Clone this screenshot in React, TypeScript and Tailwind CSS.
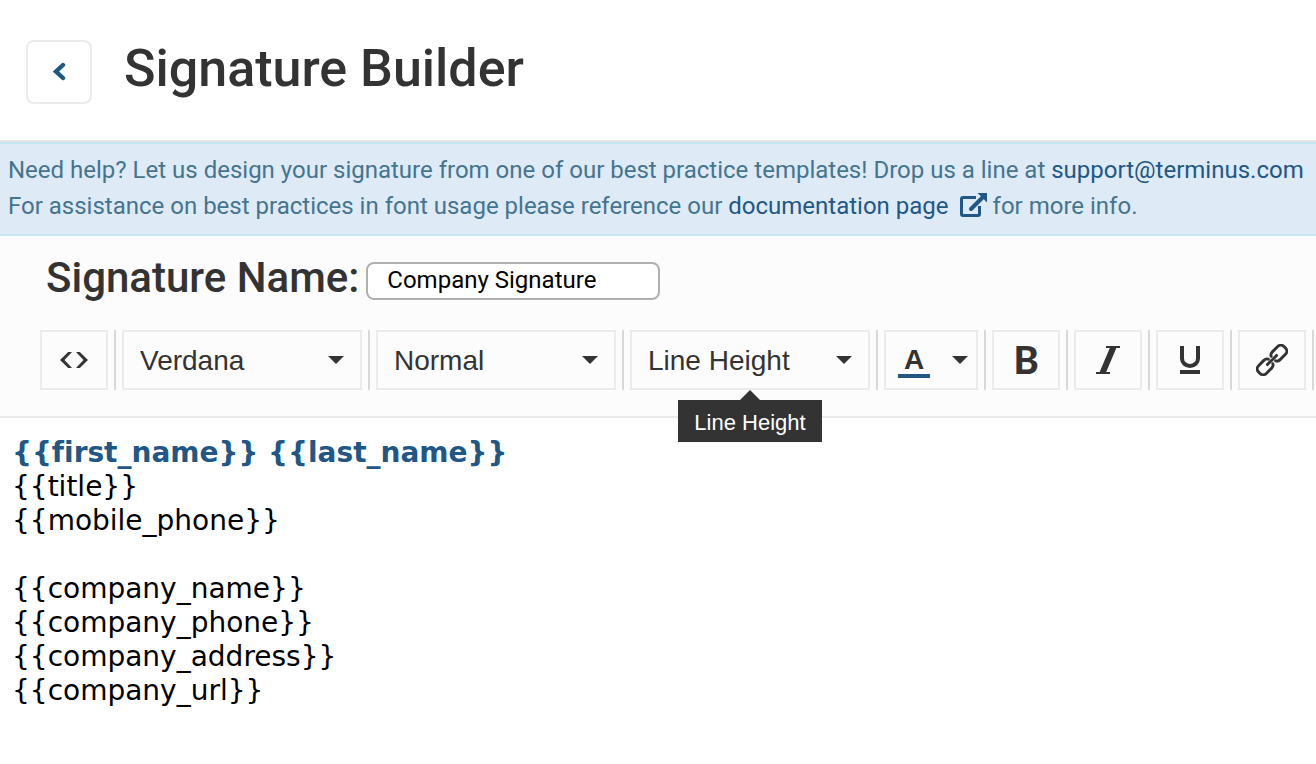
import React, { useState } from 'react';

const fonts = ['Verdana', 'Arial', 'Georgia', 'Tahoma'];
const sizes = ['Normal', 'Small', 'Large', 'Huge'];
const lineHeights = ['Line Height', '1', '1.15', '1.5', '2'];

const signatureLines = [
  '{{title}}',
  '{{mobile_phone}}',
  '',
  '{{company_name}}',
  '{{company_phone}}',
  '{{company_address}}',
  '{{company_url}}',
];

function Caret() {
  return (
    <svg className="w-4 h-2 pointer-events-none" viewBox="0 0 16 8" fill="#333333">
      <path d="M0 0h16L8 8z" />
    </svg>
  );
}

function Separator() {
  return <div className="w-0.5 h-15 shrink-0 bg-[#d9d9d9]" />;
}

function ToolButton({ label, children }: { label: string; children: React.ReactNode }) {
  return (
    <button
      type="button"
      aria-label={label}
      className="flex items-center justify-center w-17 h-15 shrink-0 border-2 border-[#ebebeb] text-[#333333]"
    >
      {children}
    </button>
  );
}

function ToolSelect({ label, options, tooltip }: { label: string; options: string[]; tooltip?: string }) {
  return (
    <div className="relative w-60 shrink-0">
      <select
        aria-label={label}
        className="block w-full h-15 pt-0.5 pl-4 pr-12 appearance-none border-2 border-[#ebebeb] bg-transparent text-[28px] leading-8 text-[#333333]"
      >
        {options.map((option) => (
          <option key={option}>{option}</option>
        ))}
      </select>
      <div className="absolute inset-y-0 right-[18px] flex items-center pointer-events-none">
        <Caret />
      </div>
      {tooltip && (
        <div
          role="tooltip"
          className="absolute top-full left-1/2 z-10 w-36 -translate-x-1/2 flex flex-col items-center"
        >
          <svg className="w-5 h-2.5" viewBox="0 0 20 10" fill="#333333">
            <path d="M0 10L10 0l10 10z" />
          </svg>
          <div className="w-full pt-2.5 pb-1.5 bg-[#282828]/95 text-center text-white text-[22px] leading-[26px] whitespace-nowrap">
            {tooltip}
          </div>
        </div>
      )}
    </div>
  );
}

export default function App() {
  const [name, setName] = useState('Company Signature');

  return (
    <div className="min-h-screen overflow-x-hidden bg-white font-[Roboto,sans-serif] text-[#333333]">
      <header className="flex items-start gap-8 px-[26px] pt-10 pb-9 border-b-2 border-[#e5e5e5]">
        <button
          type="button"
          aria-label="Back"
          className="flex items-center justify-center w-[66px] h-16 border-2 border-[#ebebeb] rounded-lg"
        >
          <svg className="w-4 h-5" viewBox="0 0 16 20" fill="none" stroke="#205787" strokeWidth="4.4" strokeLinecap="round">
            <path d="M12 3L5 9.500l7 6.500" />
          </svg>
        </button>
        <h1 className="text-[52px] leading-[58px] font-medium">Signature Builder</h1>
      </header>

      <div className="px-2 pt-2 pb-2.5 border-y-2 border-[#c3e6ef] bg-[#deebf7] text-2xl leading-9 text-[#45748f]">
        <p className="whitespace-nowrap">
          Need help? Let us design your signature from one of our best practice templates! Drop us a line at{' '}
          <a href="mailto:support@terminus.com" className="text-[#205787]">support@terminus.com</a>
        </p>
        <p className="whitespace-nowrap">
          For assistance on best practices in font usage please reference our{' '}
          <a href="#documentation" className="text-[#205787]">
            documentation page
            <svg className="inline-block w-7 h-6 ml-2.5 mr-1.5 align-[-3px]" viewBox="0 0 28 24" fill="none" stroke="#205787">
              <path d="M17 4.500H4A1.500 1.500 0 0 0 2.500 6v15A1.500 1.500 0 0 0 4 22.500h15a1.500 1.500 0 0 0 1.500-1.500v-8" strokeWidth="3" />
              <path d="M12 16L23 5" strokeWidth="4" strokeLinecap="round" />
              <path d="M18.500 0H28v9.500z" fill="#205787" stroke="none" />
            </svg>
          </a>
          for more info.
        </p>
      </div>

      <section className="pt-4 pb-[26px] border-b-2 border-[#ebebeb] bg-[#fcfcfc]">
        <div className="flex items-center gap-[7px] px-[46px]">
          <label htmlFor="signature-name" className="text-[42px] leading-[52px] font-medium">
            Signature Name:
          </label>
          <input
            id="signature-name"
            type="text"
            value={name}
            onChange={(e) => setName(e.target.value)}
            className="w-[294px] h-[38px] mt-1.5 px-[19px] pb-0.5 border-2 border-[#b0b0b0] rounded-lg bg-white text-2xl leading-8 text-black"
          />
        </div>

        <div className="flex items-center gap-1.5 pl-10 mt-[26px] font-['Liberation_Sans',Arial,sans-serif]">
          <ToolButton label="Source code">
            <svg className="w-7 h-4" viewBox="0 0 28 16" fill="#333333">
              <path d="M8.200 0H12L4.500 8l7.500 8H8.200L0 8zM19.800 0H16l7.500 8-7.500 8h3.800L28 8z" />
            </svg>
          </ToolButton>
          <Separator />
          <ToolSelect label="Font" options={fonts} />
          <Separator />
          <ToolSelect label="Text size" options={sizes} />
          <Separator />
          <ToolSelect label="Line Height" options={lineHeights} tooltip="Line Height" />
          <Separator />
          <button
            type="button"
            aria-label="Text color"
            className="flex items-center justify-between w-[94px] h-15 pl-3 pr-2 shrink-0 border-2 border-[#ebebeb]"
          >
            <span className="flex flex-col items-center w-8 pt-1 border-b-4 border-[#205787] text-[28px] leading-7 font-bold">
              A
            </span>
            <Caret />
          </button>
          <Separator />
          <ToolButton label="Bold">
            <span className="pb-0.5 font-[Lato] font-black text-[38px] leading-10">B</span>
          </ToolButton>
          <Separator />
          <ToolButton label="Italic">
            <svg className="w-6 h-7" viewBox="0 0 24 28" fill="none" stroke="#333333">
              <path d="M10 1h14M0 27h14" strokeWidth="2" />
              <path d="M17.500 1L6.500 27" strokeWidth="6" />
            </svg>
          </ToolButton>
          <Separator />
          <ToolButton label="Underline">
            <svg className="w-5 h-7" viewBox="0 0 20 28" fill="none" stroke="#333333" strokeWidth="4">
              <path d="M2 0v12.500a8 7.500 0 0 0 16 0V0M0 26h20" />
            </svg>
          </ToolButton>
          <Separator />
          <ToolButton label="Insert link">
            <svg className="w-8 h-8" viewBox="-16 -16 32 32" fill="none" stroke="#333333" strokeWidth="2.900" strokeLinecap="round">
              <g transform="rotate(-45)">
                <path d="M-6.500 0H6.500" />
                <path d="M2 -3.200Q3 -5.500 6 -5.500H13.500A4.500 4.500 0 0 1 18 -1V1A4.500 4.500 0 0 1 13.500 5.500H6Q3 5.500 2 3.200" />
                <path d="M-2 -3.200Q-3 -5.500 -6 -5.500H-13.500A4.500 4.500 0 0 0 -18 -1V1A4.500 4.500 0 0 0 -13.500 5.500H-6Q-3 5.500 -2 3.200" />
              </g>
            </svg>
          </ToolButton>
          <Separator />
        </div>
      </section>

      <main className="px-3 py-[18px] font-['DejaVu_Sans',Verdana,sans-serif] text-[28px] leading-[34px] text-black [font-variant-ligatures:none]">
        <p className="font-bold text-[#205787]">{'{{first_name}} {{last_name}}'}</p>
        {signatureLines.map((line, index) => (
          <p key={index} className="min-h-[34px]">{line}</p>
        ))}
      </main>
    </div>
  );
}
